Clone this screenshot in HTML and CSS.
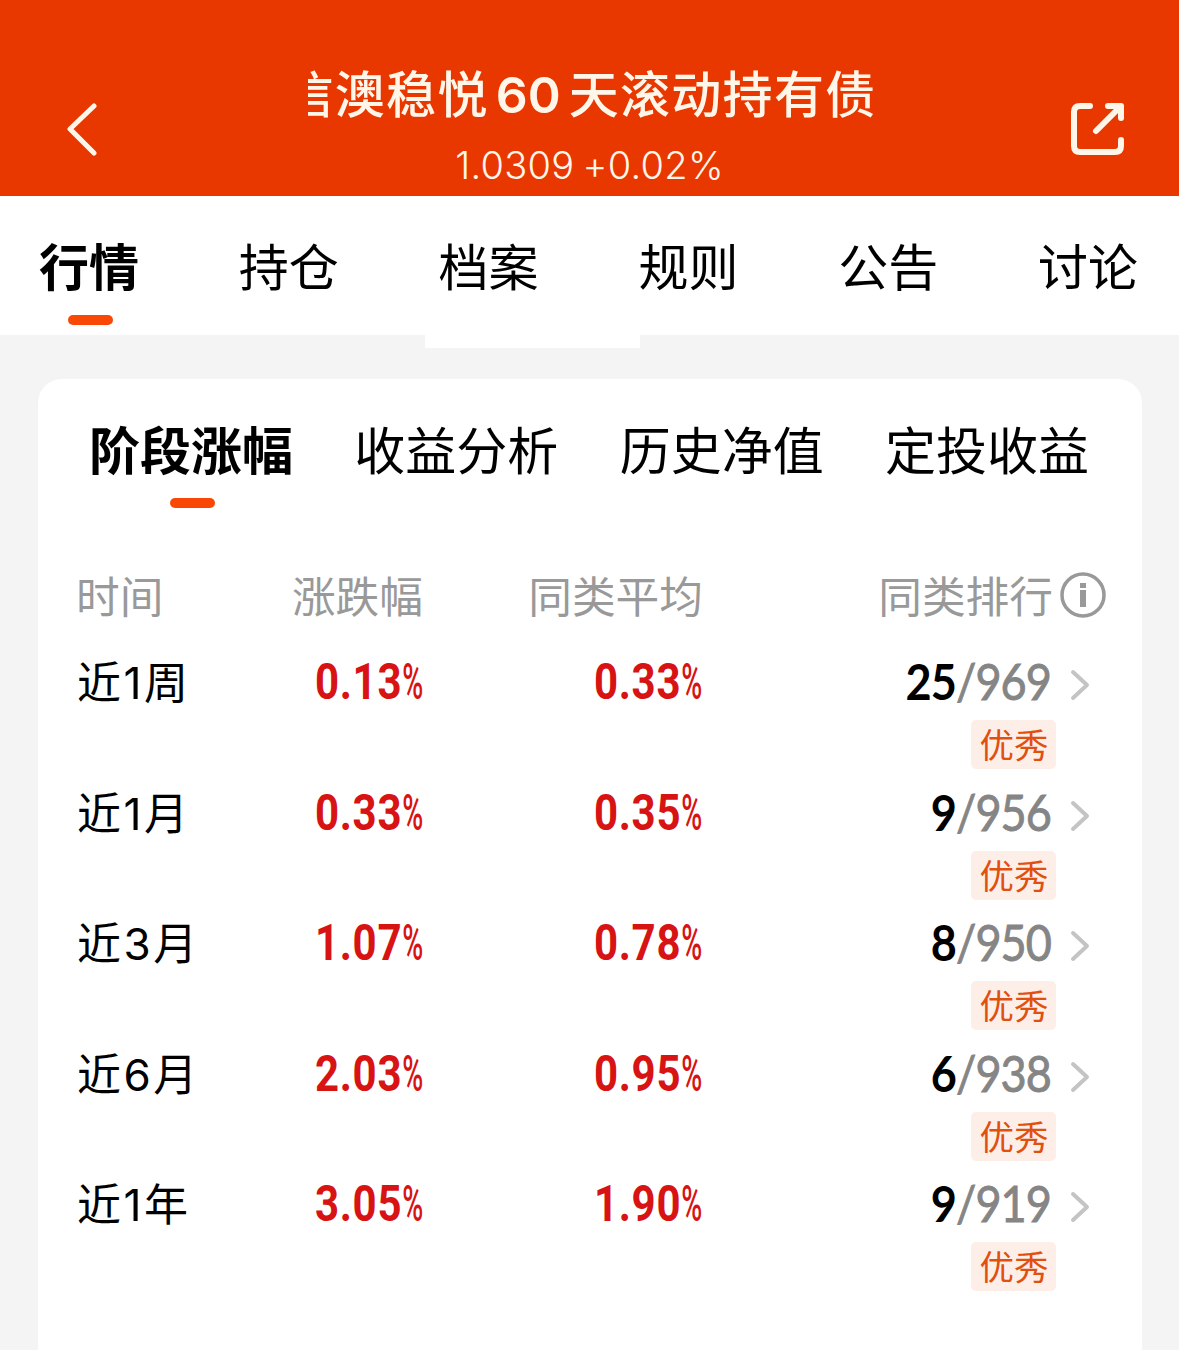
FILE: index.html
```html
<!DOCTYPE html>
<html lang="zh-CN">

<head>
    <meta charset="UTF-8">
    <meta name="viewport" content="width=device-width, initial-scale=1.0">
    <title>信澳稳悦60天滚动持有债</title>
    <link rel="stylesheet" href="styles.css">
</head>

<body>
    <header class="header">
        <svg class="back" width="32" height="54" viewBox="0 0 32 54">
            <path d="M29 4 L5 27 L29 51" />
        </svg>
        <div class="fund">
            <h1><span>信澳稳悦<b>60</b>天滚动持有债</span></h1>
            <p>1.0309 +0.02%</p>
        </div>
        <svg class="share" width="56" height="54" viewBox="0 0 56 54">
            <path d="M20 4 H10 Q4 4 4 10 V44 Q4 50 10 50 H45 Q51 50 51 44 V38" />
            <path d="M26 29 L49 6 M38 4 H51 V16" />
        </svg>
    </header>

    <ul class="nav">
        <li class="on">行情</li>
        <li>持仓</li>
        <li>档案</li>
        <li>规则</li>
        <li>公告</li>
        <li>讨论</li>
    </ul>
    <div class="notch"></div>

    <div class="card">
        <ul class="tabs">
            <li class="on">阶段涨幅</li>
            <li>收益分析</li>
            <li>历史净值</li>
            <li>定投收益</li>
        </ul>

        <div class="row head">
            <span>时间</span>
            <span>涨跌幅</span>
            <span>同类平均</span>
            <span>同类排行</span>
            <svg class="info" width="46" height="46" viewBox="0 0 46 46">
                <circle cx="23" cy="23" r="21" />
                <path d="M23 11 V16 M23 18 V35" />
            </svg>
        </div>

        <div class="row">
            <span class="time">近1周</span>
            <span class="rate">0.13<i>%</i></span>
            <span class="rate">0.33<i>%</i></span>
            <span class="rank"><b>25</b>/969</span>
            <svg class="arrow" width="20" height="32" viewBox="0 0 20 32"><path d="M3 3 L17 16 L3 29" /></svg>
            <em class="badge">优秀</em>
        </div>
        <div class="row">
            <span class="time">近1月</span>
            <span class="rate">0.33<i>%</i></span>
            <span class="rate">0.35<i>%</i></span>
            <span class="rank"><b>9</b>/956</span>
            <svg class="arrow" width="20" height="32" viewBox="0 0 20 32"><path d="M3 3 L17 16 L3 29" /></svg>
            <em class="badge">优秀</em>
        </div>
        <div class="row">
            <span class="time">近3月</span>
            <span class="rate">1.07<i>%</i></span>
            <span class="rate">0.78<i>%</i></span>
            <span class="rank"><b>8</b>/950</span>
            <svg class="arrow" width="20" height="32" viewBox="0 0 20 32"><path d="M3 3 L17 16 L3 29" /></svg>
            <em class="badge">优秀</em>
        </div>
        <div class="row">
            <span class="time">近6月</span>
            <span class="rate">2.03<i>%</i></span>
            <span class="rate">0.95<i>%</i></span>
            <span class="rank"><b>6</b>/938</span>
            <svg class="arrow" width="20" height="32" viewBox="0 0 20 32"><path d="M3 3 L17 16 L3 29" /></svg>
            <em class="badge">优秀</em>
        </div>
        <div class="row">
            <span class="time">近1年</span>
            <span class="rate">3.05<i>%</i></span>
            <span class="rate">1.90<i>%</i></span>
            <span class="rank"><b>9</b>/919</span>
            <svg class="arrow" width="20" height="32" viewBox="0 0 20 32"><path d="M3 3 L17 16 L3 29" /></svg>
            <em class="badge">优秀</em>
        </div>
    </div>
</body>

</html>
```
FILE: styles.css
```css
/* reset */
body,
h1,
p,
ul,
li {
    margin: 0;
    padding: 0
}

ul {
    list-style: none
}

em,
i {
    font-style: normal
}

/*style*/

body {
    height: 1350px;
    display: flex;
    flex-direction: column;
    overflow: hidden;
    background-color: #f4f4f4;
    color: #000;
    font-family: Inter, 'Noto Sans CJK SC', sans-serif;
}

svg {
    fill: none;
    stroke-linecap: round;
    stroke-linejoin: round;
}

.header {
    flex: none;
    display: flex;
    justify-content: space-between;
    align-items: flex-start;
    height: 196px;
    padding: 0 53px 0 65px;
    box-sizing: border-box;
    background-color: #e93700;
    color: #fff6ea;
}

.header svg {
    margin-top: 102px;
    stroke: #fff6ea;
    stroke-width: 5;
}

.header .share {
    stroke-width: 6;
}

.fund {
    margin-left: 17px;
    text-align: center;
}

.fund h1 {
    display: flex;
    justify-content: flex-end;
    width: 569px;
    height: 74px;
    margin-top: 58px;
    overflow: hidden;
    font-size: 50px;
    font-weight: 500;
    line-height: 75px;
    letter-spacing: 1.3px;
    white-space: nowrap;
}

.fund h1 b {
    margin: 0 8px 0 7px;
    font-weight: 600;
    letter-spacing: 0;
}

.fund p {
    margin-left: -5px;
    font-size: 38px;
    font-weight: 300;
    line-height: 66px;
    letter-spacing: .3px;
    word-spacing: -3px;
}

.nav,
.tabs {
    display: flex;
    justify-content: space-between;
}

.nav {
    flex: none;
    height: 139px;
    padding: 0 41px 0 39px;
    background-color: #fff;
    font-size: 50px;
    line-height: 144px;
}

.nav li,
.tabs li {
    position: relative;
}

.on {
    font-weight: 700;
}

.on::after {
    content: '';
    position: absolute;
    left: 50%;
    bottom: 10px;
    width: 45px;
    height: 10px;
    margin-left: -21px;
    border-radius: 5px;
    background-color: #f94806;
}

.notch {
    flex: none;
    width: 215px;
    height: 13px;
    margin-left: 425px;
    background-color: #fff;
}

.card {
    flex: 1;
    margin: 31px 37px 0 38px;
    border-radius: 24px 24px 0 0;
    background-color: #fff;
}

.tabs {
    height: 139px;
    padding: 0 53px 0 51px;
    font-size: 51px;
    line-height: 146px;
}

.row {
    display: grid;
    grid-template-columns: 160px 187px 279px 349px 1fr;
    grid-template-rows: 76px 54.5px;
    padding-left: 39px;
    text-align: right;
}

.row span:first-child {
    text-align: left;
}

.head {
    grid-template-columns: 160px 186px 280px 350px 1fr;
    grid-template-rows: 88px;
    margin-top: 34px;
    color: #999;
    font-size: 43.7px;
    line-height: 91px;
}

.head span:first-child {
    margin-left: -1px;
}

.info {
    margin: 20px 0 0 7px;
    stroke: #999;
    stroke-width: 3.5;
}

.info path {
    stroke-linecap: butt;
    stroke-width: 6;
}

.time {
    font-size: 44px;
    line-height: 86px;
    letter-spacing: 2.5px;
}

/* squeezed to look like DIN */
.rate,
.rank {
    font-family: Roboto, sans-serif;
    font-size: 50px;
    line-height: 85px;
    transform-origin: right;
}

.rate {
    color: #d71313;
    font-weight: 700;
    letter-spacing: .8px;
    transform: scaleX(.84);
}

.rate i {
    display: inline-block;
    width: 26px;
    font-weight: 500;
    text-align: left;
    transform: scaleX(.68);
    transform-origin: left;
}

.rank {
    margin-right: 1px;
    color: #858585;
    font-family: Lato, sans-serif;
    line-height: 82px;
    letter-spacing: -1px;
    transform: scaleX(.9);
    -webkit-text-stroke: .9px;
}

.rank b {
    color: #000;
    -webkit-text-stroke: 0;
}

.arrow {
    margin: 29px 0 0 18px;
    stroke: #c4c4c4;
    stroke-width: 4;
}

.badge {
    grid-column: 4;
    justify-self: end;
    width: 85px;
    height: 49px;
    margin: 4px -4px 0 0;
    border-radius: 5px;
    background-color: #fdeee8;
    color: #e0500f;
    font-size: 34.5px;
    line-height: 51px;
    text-align: center;
    text-indent: 1px;
}
```
